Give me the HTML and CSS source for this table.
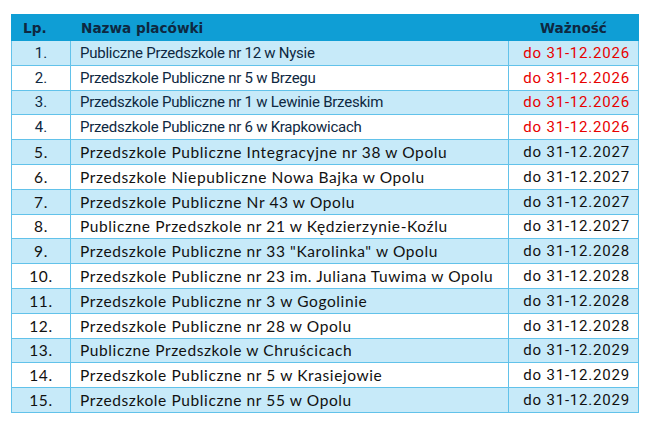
FILE: index.html
```html
<!DOCTYPE html>
<html lang="pl">
<head>
<meta charset="utf-8">
<title>Placówki</title>
<link rel="stylesheet" href="styles.css">
</head>
<body>
<table class="list">
  <colgroup>
    <col class="c-lp"><col class="c-name"><col class="c-date">
  </colgroup>
  <thead>
    <tr class="head">
      <th class="lp-h">Lp.</th>
      <th class="name-h">Nazwa placówki</th>
      <th class="date-h">Ważność</th>
    </tr>
  </thead>
  <tbody>
    <tr class="band a"><td class="lp">1.</td><td class="name">Publiczne Przedszkole nr 12 w Nysie</td><td class="date red">do 31-12.2026</td></tr>
    <tr class="a"><td class="lp">2.</td><td class="name">Przedszkole Publiczne nr 5 w Brzegu</td><td class="date red">do 31-12.2026</td></tr>
    <tr class="band a"><td class="lp">3.</td><td class="name">Przedszkole Publiczne nr 1 w Lewinie Brzeskim</td><td class="date red">do 31-12.2026</td></tr>
    <tr class="a"><td class="lp">4.</td><td class="name">Przedszkole Publiczne nr 6 w Krapkowicach</td><td class="date red">do 31-12.2026</td></tr>
    <tr class="band c"><td class="lp">5.</td><td class="name">Przedszkole Publiczne Integracyjne nr 38 w Opolu</td><td class="date">do 31-12.2027</td></tr>
    <tr class="c"><td class="lp">6.</td><td class="name">Przedszkole Niepubliczne Nowa Bajka w Opolu</td><td class="date">do 31-12.2027</td></tr>
    <tr class="band c"><td class="lp">7.</td><td class="name">Przedszkole Publiczne Nr 43 w Opolu</td><td class="date">do 31-12.2027</td></tr>
    <tr class="c"><td class="lp">8.</td><td class="name">Publiczne Przedszkole nr 21 w Kędzierzynie-Koźlu</td><td class="date">do 31-12.2027</td></tr>
    <tr class="band c"><td class="lp">9.</td><td class="name">Przedszkole Publiczne nr 33 "Karolinka" w Opolu</td><td class="date">do 31-12.2028</td></tr>
    <tr class="c"><td class="lp">10.</td><td class="name">Przedszkole Publiczne nr 23 im. Juliana Tuwima w Opolu</td><td class="date">do 31-12.2028</td></tr>
    <tr class="band c"><td class="lp">11.</td><td class="name">Przedszkole Publiczne nr 3 w Gogolinie</td><td class="date">do 31-12.2028</td></tr>
    <tr class="c"><td class="lp">12.</td><td class="name">Przedszkole Publiczne nr 28 w Opolu</td><td class="date">do 31-12.2028</td></tr>
    <tr class="band c"><td class="lp">13.</td><td class="name">Publiczne Przedszkole w Chruścicach</td><td class="date">do 31-12.2029</td></tr>
    <tr class="c"><td class="lp">14.</td><td class="name">Przedszkole Publiczne nr 5 w Krasiejowie</td><td class="date">do 31-12.2029</td></tr>
    <tr class="band c"><td class="lp">15.</td><td class="name">Przedszkole Publiczne nr 55 w Opolu</td><td class="date">do 31-12.2029</td></tr>
  </tbody>
</table>
</body>
</html>
```
FILE: styles.css
```css
html, body {
  margin: 0;
  padding: 0;
  background: #ffffff;
}
body {
  padding: 14px 0 0 11px;
}
.list {
  border-collapse: collapse;
  table-layout: fixed;
  width: 627px;
  font-family: Roboto, sans-serif;
  font-size: 15px;
  color: #0e2841;
}
.c-lp { width: 59px; }
.c-name { width: 438px; }
.c-date { width: 130px; }

.head th {
  background: #0f9ed5;
  height: 25px;
  padding: 0 10px;
  font-family: "DejaVu Sans", sans-serif;
  font-size: 13.6px;
  font-weight: 700;
  color: #0e2841;
  text-align: left;
  border: 1px solid #0f9ed5;
}
.head .lp-h { padding-left: 11px; }
.head .date-h { text-align: center; padding: 0; }

tbody tr { height: 24.8px; }
tbody td {
  border: 1px solid #62c2ea;
  padding: 0 9px;
  white-space: nowrap;
  line-height: 18px;
}
.band td { background: #c7eaf9; }
.lp { text-align: center; }
.a .name { letter-spacing: -0.25px; }
.date {
  text-align: right;
  padding-right: 8px;
  letter-spacing: 0.8px;
}
.red { color: #e80000; }
.c .lp, .c .name {
  font-family: Lato, sans-serif;
  font-size: 15.5px;
  letter-spacing: 0.6px;
  color: #111;
}
.c .date { color: #111; }
```
